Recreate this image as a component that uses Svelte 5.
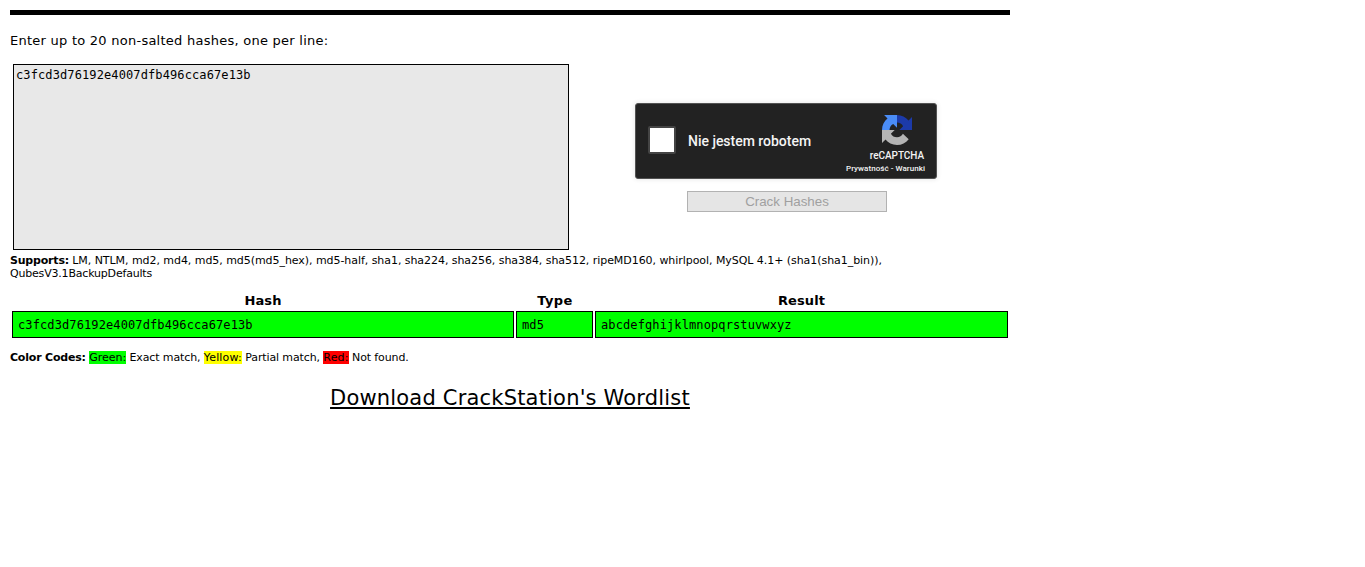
<script>
  const results = [{ hash: 'c3fcd3d76192e4007dfb496cca67e13b', type: 'md5', result: 'abcdefghijklmnopqrstuvwxyz' }];
</script>

<main>
  <div class="rule"></div>
  <p class="intro">Enter up to 20 non-salted hashes, one per line:</p>
  <div class="form">
    <div class="input mono">c3fcd3d76192e4007dfb496cca67e13b</div>
    <div class="side">
      <div class="captcha">
        <span class="box"></span>
        <span class="label">Nie jestem robotem</span>
        <div class="brand">
          <svg width="30" height="30" viewBox="0 0 30 30">
            <path fill="#1c3aa9" d="M15 0C19.6 0 23.8 2.1 26.5 5.5L30 2.1V15H17.3L21.1 11.2C19.8 8.8 17.8 7.6 15 7.5Z" />
            <path fill="#4a8cf6" d="M15 0V12.7L11.2 8.9C8.8 10.2 7.6 12.2 7.5 15H0C0 10.2 2.1 6.2 5.5 3.5L2.1 0Z" />
            <path fill="#b4b4b4" d="M0 15H12.7L8.9 18.8C10.2 21.2 12.2 22.3 15 22.3C17.8 22.3 19.6 20.9 20.9 18.7L26.7 24.2C23.8 28 19.8 30 15 30C10.2 30 6.2 27.9 3.5 24.5L0 27.9Z" />
          </svg>
          <span class="name">reCAPTCHA</span>
          <span class="terms">Prywatność - Warunki</span>
        </div>
      </div>
      <button disabled>Crack Hashes</button>
    </div>
  </div>
  <p class="supports"><b>Supports:</b> <span>LM, NTLM, md2, md4, md5, md5(md5_hex), md5-half, sha1, sha224, sha256, sha384, sha512, ripeMD160, whirlpool, MySQL 4.1+ (sha1(sha1_bin)),</span><br />QubesV3.1BackupDefaults</p>
  <div class="table">
    <div class="th">Hash</div>
    <div class="th type">Type</div>
    <div class="th">Result</div>
    {#each results as r}
      <div class="td mono">{r.hash}</div>
      <div class="td mono">{r.type}</div>
      <div class="td mono">{r.result}</div>
    {/each}
  </div>
  <p class="codes"><b>Color Codes:</b> <span class="green">Green:</span> Exact match, <span class="yellow">Yellow:</span> Partial match, <span class="red">Red:</span> Not found.</p>
  <div class="download"><a href="#wordlist">Download CrackStation's Wordlist</a></div>
</main>

<style>
  :global(body) { background: #fff; }
  main {
    width: 1000px;
    padding: 10px 0 0 10px;
    color: #000;
    font-family: Verdana, 'DejaVu Sans', sans-serif;
  }
  p { margin: 0; white-space: nowrap; }
  .rule { height: 5px; background: #000; }
  .intro { margin-top: 17px; font-size: 13px; line-height: 18px; letter-spacing: 0.25px; }
  .mono { font-family: 'DejaVu Sans Mono', monospace; font-size: 12px; letter-spacing: 0.11px; }
  .form { display: flex; margin: 14px 0 0 3px; }
  .input {
    box-sizing: border-box;
    width: 556px;
    height: 186px;
    padding: 3px 2px 2px;
    border: 1px solid #000;
    background: #e8e8e8;
    line-height: 15px;
  }
  .side { display: flex; flex-direction: column; align-items: center; margin: 39px 0 0 66px; width: 302px; }
  .captcha {
    box-sizing: border-box;
    display: flex;
    align-items: center;
    width: 302px;
    height: 76px;
    padding-left: 12px;
    border: 1px solid #525252;
    border-radius: 3px;
    background: #222;
    box-shadow: 0 0 4px 1px rgba(0, 0, 0, 0.08);
    color: #f4f4f4;
    font-family: Roboto, sans-serif;
  }
  .box { box-sizing: border-box; width: 28px; height: 28px; margin-top: -2px; border: 2px solid #444; border-radius: 2px; background: #fff; }
  .label { margin-left: 12px; font-size: 14px; line-height: 17px; font-weight: 500; letter-spacing: -0.02px; }
  .brand { display: flex; flex-direction: column; align-items: flex-end; height: 74px; margin: 0 11px 0 auto; }
  .brand svg { margin: 11px 13px 0 0; flex: none; }
  .name { margin: 5px 1px 0 0; font-size: 10px; line-height: 12px; font-weight: 500; letter-spacing: -0.05px; }
  .terms { font-size: 8px; line-height: 13px; font-weight: 500; letter-spacing: 0.05px; }
  button {
    box-sizing: border-box;
    width: 200px;
    height: 21px;
    margin: 12px 0 0 2px;
    padding: 0;
    border: 1px solid #b2b2b2;
    background: #e5e5e5;
    color: #a0a0a0;
    font: 13.33px/19px 'Liberation Sans', Arial, sans-serif;
  }
  .supports { margin-top: 4px; font-size: 11px; line-height: 13px; letter-spacing: -0.19px; }
  .supports span { letter-spacing: -0.055px; }
  .table { display: grid; grid-template-columns: 502px 77px 413px; column-gap: 2px; margin: 11px 0 0 2px; }
  .th { height: 20px; font-size: 13px; line-height: 20px; font-weight: 700; letter-spacing: 0.1px; text-align: center; }
  .type { padding-left: 1px; letter-spacing: 0.4px; }
  .td { box-sizing: border-box; height: 27px; padding-left: 5px; border: 1px solid #000; background: #0f0; line-height: 27px; }
  .codes { margin-top: 13px; font-size: 11px; line-height: 13px; letter-spacing: -0.12px; }
  .codes b { letter-spacing: -0.2px; }
  .green { background: #0f0; letter-spacing: 0; }
  .yellow { background: #ff0; letter-spacing: 0.15px; }
  .red { background: #f00; letter-spacing: 0.2px; }
  .download { margin-top: 20px; font-size: 21px; line-height: 28px; letter-spacing: 0.19px; text-align: center; }
  .download a { color: #000; text-decoration: underline; text-decoration-thickness: 2px; text-underline-offset: 2px; }
</style>
